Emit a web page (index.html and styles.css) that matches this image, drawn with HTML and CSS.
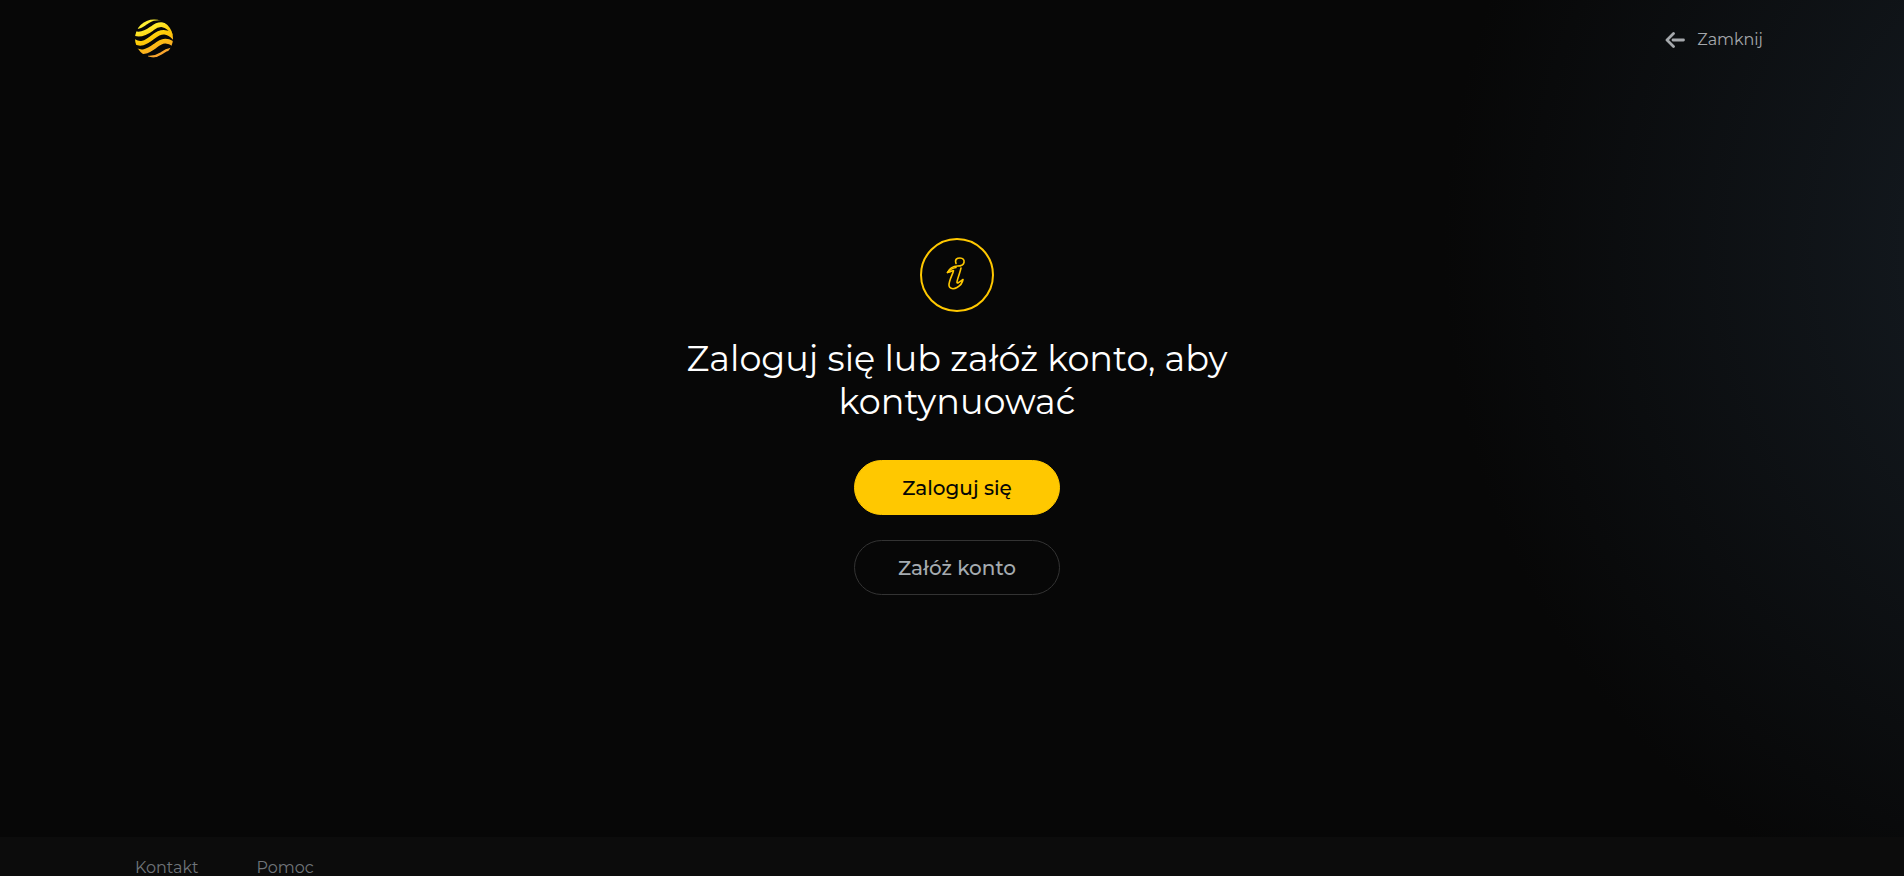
FILE: index.html
```
<!DOCTYPE html>
<html lang="pl">
<head>
    <meta charset="UTF-8">
    <meta name="viewport" content="width=device-width, initial-scale=1.0">
    <title>Logowanie</title>
    <link rel="stylesheet" href="styles.css">
</head>
<body>

    <header class="header">
        <a href="#" class="logo" aria-label="Strona główna">
            <svg width="40" height="40" viewBox="0 0 40 40">
                <defs>
                    <linearGradient id="logoFill" gradientUnits="userSpaceOnUse" x1="12" y1="2" x2="26" y2="38">
                        <stop offset="0.15" stop-color="#fff032"/>
                        <stop offset="0.5" stop-color="#ffc905"/>
                        <stop offset="1" stop-color="#f9a032"/>
                    </linearGradient>
                    <clipPath id="logoCircle">
                        <circle cx="20" cy="20.500" r="19"/>
                    </clipPath>
                </defs>
                <g fill="none" stroke="url(#logoFill)" stroke-width="4.700" clip-path="url(#logoCircle)">
                    <path stroke="none" fill="url(#logoFill)" d="M3.500 11C9 10 11 7.500 15 5C19 2.500 23 2 28 2.500L24 0H12L5 6z"/>
                    <path d="M-2 14C5 19 12 15 18 10.500C25 5 32 4.500 40 15.500"/>
                    <path d="M-2 22C6 28.500 12 24.500 19 19C27 12.500 34 12 42 21.500"/>
                    <path d="M-1 30.500C7 37 14 33 21 28C28 22 34 21 42 28"/>
                    <path stroke-width="2.500" d="M14 39C20 39.500 23 38 27 35.500C31 32.500 33 31.500 37 31"/>
                </g>
            </svg>
        </a>
        <a href="#" class="close">
            <svg width="20" height="16" viewBox="0 0 20 16" fill="none" stroke="currentColor" stroke-width="2.8" stroke-linecap="round" stroke-linejoin="round">
                <path d="M8.500 1.500L2 8l6.500 6.500M8 8h10.500"/>
            </svg>
            Zamknij
        </a>
    </header>

    <main class="content">
        <svg class="info-icon" width="76" height="76" viewBox="0 0 76 76" fill="none" stroke="#ffc800" stroke-width="2">
            <circle cx="38" cy="38" r="36"/>
            <g stroke-width="1.6" stroke-linecap="round" stroke-linejoin="round">
                <path d="M37 26.500C35.500 22 38 21 41 21C44 21 45.500 23 45 25.500C44.500 28 42 29 38.500 29C34 29 30 32 28.500 35.500C32 35 34 33 34.500 33.500C35 34.500 29.500 44 30 48.500C30.500 52 34.500 52.500 38 50.500C41.500 48.500 43.500 45.500 44 42.500C41.500 44 38.500 47 38 45.500C37.500 44 41 36 42 31"/>
                <path d="M28.500 35.500C31 32.500 34 31 37 30.500"/>
            </g>
        </svg>
        <h1>Zaloguj się lub załóż konto, aby kontynuować</h1>
        <div class="buttons">
            <button type="button" class="btn btn-primary">Zaloguj się</button>
            <button type="button" class="btn btn-outline">Załóż konto</button>
        </div>
    </main>

    <footer class="footer">
        <a href="#">Kontakt</a>
        <a href="#">Pomoc</a>
    </footer>

</body>
</html>
```
FILE: styles.css
```
* {
    box-sizing: border-box;
}

body {
    display: flex;
    flex-direction: column;
    height: 100vh;
    margin: 0;
    overflow: hidden;
    font-family: Montserrat, Inter, sans-serif;
    font-size: 16px;
    color: #fff;
    background: #070707 radial-gradient(circle 720px at calc(100% + 260px) 250px, #182028, #070707);
}

a {
    color: inherit;
    text-decoration: none;
}

.header {
    display: flex;
    justify-content: space-between;
    align-items: center;
    height: 76px;
    padding: 0 141px 0 134px;
}

.logo svg {
    display: block;
}

.close {
    display: flex;
    align-items: center;
    gap: 12px;
    padding-top: 3px;
    color: #a5a8ac;
}

.content {
    display: flex;
    flex: 1;
    flex-direction: column;
    align-items: center;
    padding: 161px 0 0 10px;
}

h1 {
    max-width: 600px;
    margin: 24px 0 37px;
    font-size: 35px;
    font-weight: 400;
    line-height: 43px;
    text-align: center;
}

.buttons {
    display: flex;
    flex-direction: column;
    gap: 25px;
}

.btn {
    width: 206px;
    height: 55px;
    border: 1px solid #333;
    border-radius: 28px;
    font-family: inherit;
    font-size: 20px;
    font-weight: 500;
    cursor: pointer;
}

.btn-primary {
    border-color: #ffc800;
    color: #060606;
    background: #ffc800;
}

.btn-outline {
    color: #a5abb0;
    background: transparent;
}

.footer {
    display: flex;
    flex-shrink: 0;
    gap: 58px;
    height: 39px;
    padding: 21px 135px 0;
    color: #70757a;
    background: #0c0c0c;
}
```
